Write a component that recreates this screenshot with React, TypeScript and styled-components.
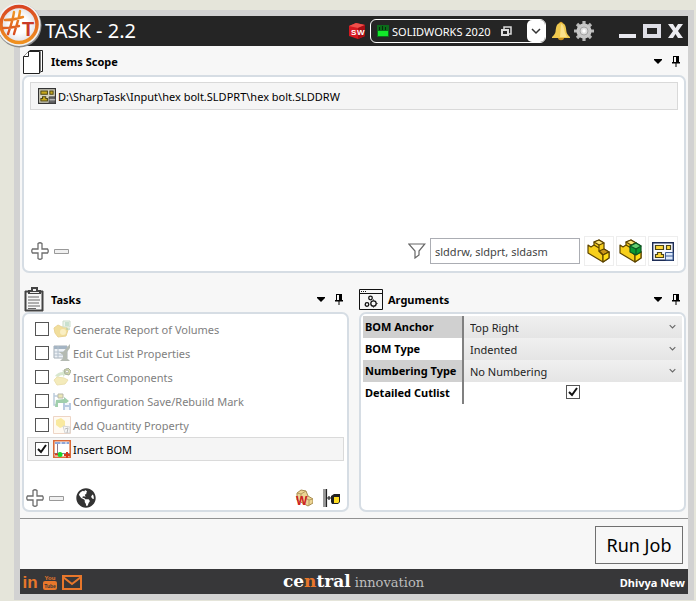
import React, { useState } from "react";
import styled, { createGlobalStyle, css } from "styled-components";
import { FaGlobeAmericas } from "react-icons/fa";

const GlobalStyle = createGlobalStyle`
  * { box-sizing: border-box; }
  body {
    margin: 0;
    background: #e5e5da;
    color: #000;
    font-family: "Noto Sans", "Open Sans", sans-serif;
    font-size: 11px;
  }
  button, input, select { font: inherit; color: inherit; }
  svg { display: block; }
`;

const Desktop = styled.div`
  display: flex;
  min-height: 100vh;
  padding: 10px 2px 1px 14px;
`;

const Frame = styled.div`
  position: relative;
  display: flex;
  flex: 1;
  min-width: 0;
  border: 6px solid #d2d2d2;
`;

const Window = styled.div`
  display: flex;
  flex: 1;
  min-width: 0;
  flex-direction: column;
  background: #f7f7f7;
`;

const AppLogo = styled.div`
  position: absolute;
  left: -24px;
  top: -14px;
`;

const TitleBar = styled.header`
  display: flex;
  align-items: center;
  height: 30px;
  padding: 0 5px 0 25px;
  background: #252525;
  color: #fff;
`;

const AppTitle = styled.h1`
  flex: 1;
  margin: 0;
  font-size: 20px;
  line-height: 30px;
  font-weight: 400;
  white-space: nowrap;
`;

const VersionPicker = styled.div`
  position: relative;
  width: 176px;
  margin: 0 6px 0 4px;
`;

const VersionSelect = styled.select`
  display: block;
  width: 100%;
  height: 24px;
  padding: 0 24px 0 21px;
  appearance: none;
  border: 1px solid #fff;
  border-radius: 6px;
  background: #252525;
  color: #fff;
`;

const PickerMark = styled.span<{ $left: number; $top: number }>`
  position: absolute;
  left: ${(p) => p.$left}px;
  top: ${(p) => p.$top}px;
  pointer-events: none;
`;

const PickerArrow = styled.span`
  position: absolute;
  top: 1px;
  right: 1px;
  display: grid;
  place-items: center;
  width: 18px;
  height: 22px;
  border-radius: 5px;
  background: #fff;
  pointer-events: none;
`;

const IconButton = styled.button`
  display: grid;
  place-items: center;
  flex: none;
  padding: 0;
  border: 0;
  background: none;
`;

const TitleActions = styled.div`
  display: flex;
  align-items: center;
  gap: 4px;
`;

const WindowControls = styled.div`
  display: flex;
  align-items: center;
  gap: 7px;
  margin-left: 25px;
`;

const Main = styled.main`
  display: flex;
  flex: 1;
  flex-direction: column;
  gap: 12px;
  padding: 0 2px 6px;
  border-bottom: 1px solid #929292;
`;

const Columns = styled.div`
  display: grid;
  flex: 1;
  grid-template-columns: 1fr 1fr;
  gap: 10px;
`;

const Section = styled.section`
  display: flex;
  flex: 1;
  min-width: 0;
  flex-direction: column;
`;

const SectionHeader = styled.div<{ $height: number }>`
  display: flex;
  align-items: center;
  gap: 5px;
  height: ${(p) => p.$height}px;
  padding-top: 2px;
`;

const SectionIcon = styled.span`
  display: grid;
  justify-items: start;
  width: 24px;
`;

const SectionTitle = styled.h2`
  flex: 1;
  margin: 0;
  font-size: 11px;
  line-height: 16px;
  font-weight: 700;
`;

const HeaderTools = styled.div`
  display: flex;
  align-items: center;
  gap: 10px;
  padding-right: 6px;
`;

const Panel = styled.div`
  display: flex;
  flex: 1;
  flex-direction: column;
  justify-content: space-between;
  padding: 2px;
  border: 2px solid #d6dde4;
  border-radius: 7px;
  background: #fff;
`;

const FileList = styled.ul`
  margin: 0;
  padding: 3px 4px;
  list-style: none;
`;

const FileItem = styled.li`
  display: flex;
  align-items: center;
  gap: 2px;
  height: 28px;
  padding: 0 7px;
  border: 1px solid #d9d9d9;
  background: #f5f5f5;
`;

const Bar = styled.div<{ $inset?: boolean }>`
  display: flex;
  align-items: center;
  justify-content: space-between;
  padding: ${(p) => (p.$inset ? "0 4px 3px 5px" : "0 4px 0 0")};
`;

const Group = styled.div<{ $gap: number }>`
  display: flex;
  align-items: center;
  gap: ${(p) => p.$gap}px;
`;

const FilterInput = styled.input`
  width: 150px;
  height: 26px;
  padding: 0 4px;
  border: 1px solid #abadb3;
  border-radius: 0;
  background: #fff;
  color: #444;
`;

const TypeButton = styled(IconButton)`
  width: 30px;
  height: 30px;
  border: 1px solid #eeeeee;
`;

const TaskList = styled.ul`
  margin: 0;
  padding: 1px;
  list-style: none;
`;

const TaskRow = styled.label<{ $selected: boolean }>`
  display: flex;
  align-items: center;
  height: 24px;
  padding: 0 7px;
  border: 1px solid transparent;
  color: #808080;
  white-space: nowrap;
  ${(p) =>
    p.$selected &&
    css`
      border-color: #dadada;
      background: #f5f5f5;
      color: #000;
    `}
`;

const TaskIcon = styled.span<{ $faded: boolean }>`
  margin: 0 2px 0 4px;
  opacity: ${(p) => (p.$faded ? 0.5 : 1)};
`;

const BoxWrap = styled.span`
  position: relative;
  display: inline-block;
  width: 14px;
  height: 14px;
  flex: none;
  svg { position: absolute; inset: 0; pointer-events: none; }
`;

const Box = styled.input`
  display: block;
  width: 14px;
  height: 14px;
  margin: 0;
  appearance: none;
  border: 1px solid #555;
  background: #fff;
  & + svg { display: none; }
  &:checked + svg { display: block; }
`;

const ArgTable = styled.table`
  width: 100%;
  border-collapse: collapse;
  table-layout: fixed;
`;

const NameCol = styled.col`
  width: 100px;
`;

const ArgName = styled.th<{ $shaded: boolean }>`
  height: 22px;
  padding: 0 0 0 2px;
  border-right: 2px solid #808080;
  background: ${(p) => (p.$shaded ? "#d0d0d0" : "#fff")};
  line-height: 20px;
  text-align: left;
  white-space: nowrap;
`;

const ArgValue = styled.td`
  padding: 0;
  text-align: center;
  vertical-align: middle;
`;

const SelectWrap = styled.div`
  position: relative;
  height: 22px;
  svg { position: absolute; right: 6px; top: 7px; pointer-events: none; }
`;

const ArgSelect = styled.select`
  display: block;
  width: 100%;
  height: 22px;
  padding: 0 18px 0 6px;
  appearance: none;
  border: 0;
  border-radius: 0;
  background: linear-gradient(#f0f0f0, #e5e5e5);
  color: #222;
`;

const ActionBar = styled.div`
  display: flex;
  justify-content: flex-end;
  padding: 7px 5px 5px;
`;

const RunButton = styled.button`
  width: 88px;
  height: 38px;
  padding: 0;
  border: 1px solid #707070;
  background: #f7f7f7;
  font-size: 18px;
`;

const Footer = styled.footer`
  display: grid;
  grid-template-columns: 1fr auto 1fr;
  align-items: center;
  height: 25px;
  padding: 0 3px 0 2px;
  background: #373739;
  color: #fff;
`;

const SocialLink = styled.a`
  display: block;
`;

const Brand = styled.div`
  display: flex;
  align-items: baseline;
  gap: 4px;
  font-family: "DejaVu Serif", serif;
  font-size: 13px;
  line-height: 24px;
  color: #bdbdbd;
`;

const BrandStrong = styled.strong`
  font-size: 17px;
  color: #fff;
  em { font-style: normal; color: #e8772b; }
`;

const UserName = styled.span`
  justify-self: end;
  font-weight: 700;
`;

const Logo = () => (
  <svg width="46" height="46" viewBox="0 0 46 46">
    <defs>
      <linearGradient id="ring" x1="0" y1="0" x2="0" y2="1">
        <stop offset="0" stopColor="#d94622" />
        <stop offset="1" stopColor="#f0911f" />
      </linearGradient>
      <radialGradient id="disc">
        <stop offset="0.5" stopColor="#fff" />
        <stop offset="1" stopColor="#dfdfe4" />
      </radialGradient>
      <linearGradient id="brush" gradientUnits="userSpaceOnUse" x1="0" y1="9" x2="0" y2="33">
        <stop offset="0" stopColor="#f09a25" />
        <stop offset="1" stopColor="#d8481f" />
      </linearGradient>
    </defs>
    <circle cx="23.500" cy="23.500" r="22" fill="#8b8b8b" />
    <circle cx="23" cy="22.500" r="21.500" fill="#f2f2f2" />
    <circle cx="23" cy="22.500" r="18" fill="url(#disc)" stroke="url(#ring)" strokeWidth="3.500" />
    <g fill="none" stroke="url(#brush)" strokeWidth="2.400" strokeLinecap="round">
      <path d="M18 10c-1 8-4 16-6 22M24 9c-1 8-4 16-6 23M9 18q9 0 18-3M7 26q8 0 16-2" />
    </g>
    <text x="32" y="34" textAnchor="middle" fontFamily="Liberation Sans, sans-serif" fontWeight="700" fontSize="20" fill="#c93a26">T</text>
  </svg>
);

const SwCube = () => (
  <svg width="18" height="18" viewBox="0 0 18 18">
    <path d="M1 4l7-3 9 2v11l-7 3-9-3z" fill="#d51920" />
    <path d="M1 4l7-3 9 2-7 3z" fill="#f0504b" />
    <path d="M10 6l7-3v11l-7 3z" fill="#a50e14" />
    <g fontFamily="Liberation Sans, sans-serif" fontWeight="700" fontSize="8" fill="#fff">
      <text x="3" y="13">S</text>
      <text x="9" y="13">W</text>
    </g>
  </svg>
);

const GreenScreen = () => (
  <svg width="12" height="12" viewBox="0 0 12 12">
    <path d="M0 0h12v12H0z" fill="#0b6b1a" />
    <path d="M1 6h10v5H1z" fill="#12e82a" />
    <path d="M2 2h1v3H2zM5 1h1v4H5zM8 2h1v3H8z" fill="#052d0a" />
  </svg>
);

const Stack = () => (
  <svg width="11" height="11" viewBox="0 0 11 11" fill="none" stroke="#dcdcdc">
    <path d="M3 3V1h7v7H8" strokeWidth="1.500" />
    <path d="M1 4h6v5H1z" strokeWidth="2" />
  </svg>
);

const Chevron = ({ size, color }: { size: number; color: string }) => (
  <svg width={size} height={size} viewBox="0 0 10 10" fill="none" stroke={color} strokeWidth="1.500">
    <path d="M1 3l4 4 4-4" />
  </svg>
);

const Bell = () => (
  <svg width="18" height="20" viewBox="0 0 18 20">
    <circle cx="9" cy="2.500" r="1.800" fill="#d9a32a" />
    <path d="M9 2c5 0 5 5 5.500 9 .3 2 1.500 3 3.500 5v1H0v-1c2-2 3-3 3.500-5C4 7 4 2 9 2z" fill="#efc84f" />
    <path d="M9 3c3 1 3 5 4 9l2 4H8z" fill="#f9e08b" />
    <path d="M6 17h6c0 3-6 3-6 0z" fill="#c78d1d" />
  </svg>
);

const Gear = () => (
  <svg width="20" height="20" viewBox="0 0 20 20">
    <g stroke="#b9b9b9" strokeWidth="3.200">
      <path d="M10 0v20M0 10h20M3 3l14 14M17 3L3 17" />
    </g>
    <circle cx="10" cy="10" r="7.600" fill="#c8c8c8" />
    <circle cx="10" cy="10" r="4" fill="#dedede" stroke="#a4a4a4" />
    <circle cx="10" cy="10" r="1.700" fill="#fff" />
  </svg>
);

const Minimise = () => (
  <svg width="17" height="16" viewBox="0 0 17 16"><path d="M0 11h17v4H0z" fill="#e8e8ee" /></svg>
);
const Maximise = () => (
  <svg width="18" height="14" viewBox="0 0 18 14"><path d="M2 2h14v10H2z" fill="none" stroke="#dedee6" strokeWidth="4" /></svg>
);
const Close = () => (
  <svg width="15" height="14" viewBox="0 0 15 14"><path d="M0 0h5l2.500 4L10 0h5l-5 7 5 7h-5l-2.500-4L5 14H0l5-7z" fill="#ececf1" /></svg>
);

const Pages = () => (
  <svg width="22" height="24" viewBox="0 0 22 24" fill="#fff" stroke="#222">
    <path d="M7.500.5h13v21h-3" />
    <path d="M6.500 1.500h12v21h-3" fill="#eee" stroke="#777" />
    <path d="M6.500 1.500h11v22h-16v-17z" />
    <path d="M6.500 1.500v5h-5" />
  </svg>
);

const Clipboard = () => (
  <svg width="22" height="25" viewBox="-2 0 22 25">
    <path d="M1 4h3v1H2v18h16V5h-2V4h3v20H1z" fill="#444" stroke="#444" />
    <path d="M4 3h3V0h7v3h3v4H4z" fill="#444" />
    <path d="M9 2h3v2H9zM6 5h9v1H6z" fill="#eee" />
    <path d="M4 10h11M4 13h12M4 16h11M4 19h12M4 21.500h8" stroke="#666" />
  </svg>
);

const ArgsIcon = () => (
  <svg width="24" height="21" viewBox="0 0 24 21" fill="none" stroke="#111">
    <path d="M.5.5h23v20H.5zM0 4.500h24" />
    <path d="M2 2.500h1M4 2.500h1M6 2.500h1" />
    <g strokeWidth="1.300">
      <circle cx="11.500" cy="9" r="1.800" />
      <circle cx="8" cy="15.500" r="1.800" />
      <circle cx="14.500" cy="14.500" r="2.700" />
    </g>
    <path d="M14.500 10.500v1M14.500 17.500v1M17.500 14.500h1" />
  </svg>
);

const Caret = () => (
  <svg width="8" height="5" viewBox="0 0 8 5"><path d="M0 0h8v1L4 5 0 1z" fill="#000" /></svg>
);
const Pin = () => (
  <svg width="8" height="11" viewBox="0 0 8 11">
    <path d="M1 0h6v6h1v1.500H4.500V11h-1V7.500H0V6h1zm1 1v5h2V1z" fill="#000" fillRule="evenodd" />
  </svg>
);

const Plus = () => (
  <svg width="18" height="18" viewBox="0 0 18 18">
    <path d="M7 1.500q2-1.500 4 0V7h5.500q1.500 2 0 4H11v5.500q-2 1.500-4 0V11H1.500Q0 9 1.500 7H7z" fill="#fff" stroke="#6e6e6e" strokeWidth="1.300" />
  </svg>
);
const Minus = () => (
  <svg width="15" height="5" viewBox="0 0 15 5"><path d="M.5.5h14v4H.5z" fill="#f0f0f0" stroke="#999" /></svg>
);

const Drawing = ({ size, dark }: { size: number; dark?: boolean }) => (
  <svg width={size} height={size - (dark ? 2 : 3)} viewBox="0 0 22 19" preserveAspectRatio="none">
    <path d="M.7.700h20.600v17.600H.7z" fill={dark ? "#d9d6c4" : "#f7f9ff"} stroke={dark ? "#333" : "#1d2c55"} strokeWidth="1.400" />
    <path d="M3.500 3.500h8v4h-8zM14.500 3.500h4v4h-4zM3.500 15.500v-3h2v-2h4v2h2v3z" fill={dark ? "#c7a91c" : "#ffd83b"} stroke="#4b4415" strokeWidth="1.200" />
    <path d="M13.500 18v-7.500H21V18z" fill={dark ? "#666" : "#dce9fb"} stroke={dark ? "#444" : "#3c5c95"} />
    <path d="M14 14h7" stroke={dark ? "#eee" : "#3c5c95"} />
  </svg>
);

const Funnel = () => (
  <svg width="18" height="16" viewBox="0 0 18 16" fill="none" stroke="#666">
    <path d="M.8 1h16L11 8v4l-4 3V8z" strokeWidth="1.200" />
  </svg>
);

const Part = ({ green }: { green?: boolean }) => (
  <svg width="24" height="24" viewBox="0 0 24 24" stroke="#5b4300" strokeLinejoin="round" strokeWidth="1.200">
    <path d="M1 6l3 2 3-2V3l5-2 5 3v6l5 3v6l-6 4L1 14z" fill="#f7cf1b" />
    <path d="M7 3l5-2 5 3-5 2z" fill="#ffe678" />
    <path d="M12 12l5-2 5 3-6 3z" fill="#c9951a" />
    <path d="M7 6l5 3V6M12 9v3l4 4v7" fill="none" />
    <path d="M16 16l6-3v6l-6 4z" fill="#ffdc16" />
    {green && (
      <g stroke="#0d5420">
        <path d="M11 7l6-3 5 3v6l-5 3-6-3z" fill="#0a9a32" />
        <path d="M11 7l6-3 5 3-5 3z" fill="#64cf70" />
        <path d="M17 10v6" />
      </g>
    )}
  </svg>
);

const TaskGlyph = ({ kind }: { kind: string }) => {
  const shapes: Record<string, React.ReactNode> = {
    report: (
      <>
        <path d="M1 8l4-3 4 2 4-1 2 4-2 6-8 1-3-4z" fill="#e4bf3b" stroke="#d7a92c" />
        <path d="M10 1h7v6h-7z" fill="#dceadb" stroke="#9bbd9b" />
        <path d="M12 3h4M12 5h4M13 9h4" stroke="#4d9e65" />
        <circle cx="10" cy="12" r="3" fill="#f6e089" />
      </>
    ),
    cutlist: (
      <>
        <path d="M1 2h13v12H1z" fill="#dfe7ef" stroke="#4d6070" />
        <path d="M1 3.500h13" stroke="#4b6c89" strokeWidth="3" />
        <path d="M1 8h13M1 11h13M5 2v12" stroke="#6b8299" />
        <path d="M17 0l-7 8H6l4 3v3l-3 3h10l-3-3V8l3-4z" fill="#6b7768" />
      </>
    ),
    component: (
      <>
        <path d="M2 8q3-4 8-4l-1-2 5 3-4 4V7Q7 7 5 9z" fill="#b2d1a0" />
        <path d="M1 12l3-3 7 1 4 2-3 4-8 1z" fill="#ead979" stroke="#dac465" />
        <path d="M11 2l4-2 3 3-2 4-4-1z" fill="#b3ba55" stroke="#4e603c" />
        <circle cx="14" cy="3.500" r="1.500" fill="#eee" stroke="#657348" />
      </>
    ),
    config: (
      <>
        <path d="M1 1v12h4M1 4h5" fill="none" stroke="#799bba" strokeWidth="1.500" />
        <path d="M5 2h5v4H5z" fill="#d9d16e" stroke="#77745a" />
        <path d="M3 8l8-1V5l5 4-5 4v-2H5v4H2z" fill="#46a05b" />
        <path d="M10 11h8v7h-8z" fill="#7496c4" />
        <path d="M12 11h4v2h-4zM12 15h4v3h-4z" fill="#e5edf6" />
      </>
    ),
    quantity: (
      <>
        <path d="M.5.500h17v17H.5z" fill="#fff7e6" stroke="#dfad8d" />
        <path d="M3 4l5-2 4 3v5l-5 2-4-3z" fill="#f4d541" />
        <path d="M10 10l7 1v6h-5z" fill="#eee" stroke="#aaa" />
        <path d="M12 13l3-1-1 5" fill="none" stroke="#777" />
      </>
    ),
    bom: (
      <>
        <path d="M.8.800h16.400v16.400H.8z" fill="#fff" stroke="#db6a38" strokeWidth="1.600" />
        <path d="M4.500 2v11M1 13.500h16" fill="none" stroke="#8a7a8d" />
        <path d="M2 3h14" stroke="#8ea6d8" strokeWidth="2" />
        <path d="M8 2v3M13 2v3" stroke="#fff" />
        <circle cx="7" cy="14.500" r="2.500" fill="#18d92b" />
        <path d="M2 14.500h3M14 12v6M11 15h6" stroke="#d73819" strokeWidth="2" />
      </>
    ),
  };
  return <svg width="18" height="18" viewBox="0 0 18 18" fill="none">{shapes[kind]}</svg>;
};

const PartW = () => (
  <svg width="18" height="18" viewBox="0 0 18 18">
    <path d="M2 4l4-3 5 1 2 5 5 3v4l-5 3L2 11z" fill="#ecd493" stroke="#a78c50" />
    <path d="M2 4l4 1 5-3M6 5v5M13 7l-3 2 4 2 4-1M14 11v5" fill="none" stroke="#b69b5f" />
    <text x="1" y="16" fontFamily="Liberation Sans, sans-serif" fontWeight="700" fontSize="12" fill="#cf2121">W</text>
  </svg>
);

const Mate = () => (
  <svg width="18" height="18" viewBox="0 0 18 18">
    <path d="M1.500 0v18" stroke="#999" strokeWidth="3" />
    <path d="M3.500 0v18M4 9h5M6 7v4" stroke="#222" strokeWidth="1.200" />
    <path d="M8 7l3-2h6v8l-2 2H9l-1-2z" fill="#222" />
    <path d="M11 8h5v5l-1 1h-4z" fill="#ffdd20" />
  </svg>
);

const LinkedIn = () => (
  <svg width="16" height="17" viewBox="0 0 16 17">
    <text x="8" y="14" textAnchor="middle" fontFamily="Liberation Sans, sans-serif" fontWeight="700" fontSize="17" fill="#e8772b">in</text>
  </svg>
);
const YouTube = () => (
  <svg width="14" height="17" viewBox="0 0 14 17" fontFamily="Liberation Sans, sans-serif" fontWeight="700" textAnchor="middle">
    <text x="7" y="6" fontSize="6" fill="#e8772b">You</text>
    <rect y="7" width="14" height="9" rx="2" fill="#e8772b" />
    <text x="7" y="14" fontSize="5" fill="#373739">Tube</text>
  </svg>
);
const Mail = () => (
  <svg width="20" height="15" viewBox="0 0 20 15" fill="none" stroke="#e8772b" strokeWidth="2">
    <path d="M1 1h18v13H1zM1 2l9 7 9-7" />
  </svg>
);

const Check = ({ checked, label, onChange }: { checked: boolean; label?: string; onChange: () => void }) => (
  <BoxWrap>
    <Box type="checkbox" checked={checked} aria-label={label} onChange={onChange} />
    <svg width="14" height="14" viewBox="0 0 14 14" fill="none" stroke="#111" strokeWidth="2">
      <path d="M3 7l3 3 5-7" />
    </svg>
  </BoxWrap>
);

const Tools = ({ name }: { name: string }) => (
  <HeaderTools>
    <IconButton aria-label={`${name} menu`}><Caret /></IconButton>
    <IconButton aria-label={`Pin ${name}`}><Pin /></IconButton>
  </HeaderTools>
);

const tasks = [
  { label: "Generate Report of Volumes", kind: "report" },
  { label: "Edit Cut List Properties", kind: "cutlist" },
  { label: "Insert Components", kind: "component" },
  { label: "Configuration Save/Rebuild Mark", kind: "config" },
  { label: "Add Quantity Property", kind: "quantity" },
  { label: "Insert BOM", kind: "bom" },
];

const args = [
  { name: "BOM Anchor", value: "Top Right" },
  { name: "BOM Type", value: "Indented" },
  { name: "Numbering Type", value: "No Numbering" },
];

export default function App() {
  const [enabled, setEnabled] = useState<string[]>(["bom"]);
  const [detailed, setDetailed] = useState(true);
  const toggle = (kind: string) =>
    setEnabled((list) => (list.includes(kind) ? list.filter((k) => k !== kind) : [...list, kind]));

  return (
    <>
      <GlobalStyle />
      <Desktop>
        <Frame>
          <Window>
            <TitleBar>
              <AppTitle>TASK - 2.2</AppTitle>
              <SwCube />
              <VersionPicker>
                <VersionSelect aria-label="SOLIDWORKS version">
                  <option>SOLIDWORKS 2020</option>
                </VersionSelect>
                <PickerMark $left={7} $top={6}><GreenScreen /></PickerMark>
                <PickerMark $left={131} $top={7}><Stack /></PickerMark>
                <PickerArrow><Chevron size={10} color="#333" /></PickerArrow>
              </VersionPicker>
              <TitleActions>
                <IconButton aria-label="Notifications"><Bell /></IconButton>
                <IconButton aria-label="Settings"><Gear /></IconButton>
              </TitleActions>
              <WindowControls>
                <IconButton aria-label="Minimise"><Minimise /></IconButton>
                <IconButton aria-label="Maximise"><Maximise /></IconButton>
                <IconButton aria-label="Close"><Close /></IconButton>
              </WindowControls>
            </TitleBar>

            <Main>
              <Section>
                <SectionHeader $height={29}>
                  <SectionIcon><Pages /></SectionIcon>
                  <SectionTitle>Items Scope</SectionTitle>
                  <Tools name="Items Scope" />
                </SectionHeader>
                <Panel>
                  <FileList>
                    <FileItem>
                      <Drawing size={18} dark />
                      D:\SharpTask\Input\hex bolt.SLDPRT\hex bolt.SLDDRW
                    </FileItem>
                  </FileList>
                  <Bar $inset>
                    <Group $gap={5}>
                      <IconButton aria-label="Add item"><Plus /></IconButton>
                      <IconButton aria-label="Remove item"><Minus /></IconButton>
                    </Group>
                    <Group $gap={4}>
                      <Funnel />
                      <FilterInput aria-label="File type filter" defaultValue="slddrw, sldprt, sldasm" />
                      <Group $gap={2}>
                        <TypeButton aria-label="Parts"><Part /></TypeButton>
                        <TypeButton aria-label="Assemblies"><Part green /></TypeButton>
                        <TypeButton aria-label="Drawings"><Drawing size={22} /></TypeButton>
                      </Group>
                    </Group>
                  </Bar>
                </Panel>
              </Section>

              <Columns>
                <Section>
                  <SectionHeader $height={27}>
                    <SectionIcon><Clipboard /></SectionIcon>
                    <SectionTitle>Tasks</SectionTitle>
                    <Tools name="Tasks" />
                  </SectionHeader>
                  <Panel>
                    <TaskList>
                      {tasks.map((t) => {
                        const on = enabled.includes(t.kind);
                        return (
                          <li key={t.kind}>
                            <TaskRow $selected={on}>
                              <Check checked={on} onChange={() => toggle(t.kind)} />
                              <TaskIcon $faded={!on}><TaskGlyph kind={t.kind} /></TaskIcon>
                              {t.label}
                            </TaskRow>
                          </li>
                        );
                      })}
                    </TaskList>
                    <Bar>
                      <Group $gap={12}>
                        <Group $gap={5}>
                          <IconButton aria-label="Add task"><Plus /></IconButton>
                          <IconButton aria-label="Remove task"><Minus /></IconButton>
                        </Group>
                        <IconButton aria-label="Browse online"><FaGlobeAmericas size={20} color="#333" /></IconButton>
                      </Group>
                      <Group $gap={10}>
                        <IconButton aria-label="Weight"><PartW /></IconButton>
                        <IconButton aria-label="Mate"><Mate /></IconButton>
                      </Group>
                    </Bar>
                  </Panel>
                </Section>

                <Section>
                  <SectionHeader $height={27}>
                    <SectionIcon><ArgsIcon /></SectionIcon>
                    <SectionTitle>Arguments</SectionTitle>
                    <Tools name="Arguments" />
                  </SectionHeader>
                  <Panel>
                    <ArgTable>
                      <colgroup><NameCol /><col /></colgroup>
                      <tbody>
                        {args.map((a, i) => (
                          <tr key={a.name}>
                            <ArgName scope="row" $shaded={i % 2 === 0}>{a.name}</ArgName>
                            <ArgValue>
                              <SelectWrap>
                                <ArgSelect aria-label={a.name}><option>{a.value}</option></ArgSelect>
                                <Chevron size={7} color="#666" />
                              </SelectWrap>
                            </ArgValue>
                          </tr>
                        ))}
                        <tr>
                          <ArgName scope="row" $shaded={false}>Detailed Cutlist</ArgName>
                          <ArgValue>
                            <Check checked={detailed} label="Detailed Cutlist" onChange={() => setDetailed(!detailed)} />
                          </ArgValue>
                        </tr>
                      </tbody>
                    </ArgTable>
                  </Panel>
                </Section>
              </Columns>
            </Main>

            <ActionBar><RunButton>Run Job</RunButton></ActionBar>

            <Footer>
              <Group $gap={5}>
                <SocialLink href="#linkedin" aria-label="LinkedIn"><LinkedIn /></SocialLink>
                <SocialLink href="#youtube" aria-label="YouTube"><YouTube /></SocialLink>
                <SocialLink href="#mail" aria-label="Email"><Mail /></SocialLink>
              </Group>
              <Brand>
                <BrandStrong>ce<em>n</em>tral</BrandStrong>
                innovation
              </Brand>
              <UserName>Dhivya New</UserName>
            </Footer>
          </Window>
          <AppLogo><Logo /></AppLogo>
        </Frame>
      </Desktop>
    </>
  );
}
